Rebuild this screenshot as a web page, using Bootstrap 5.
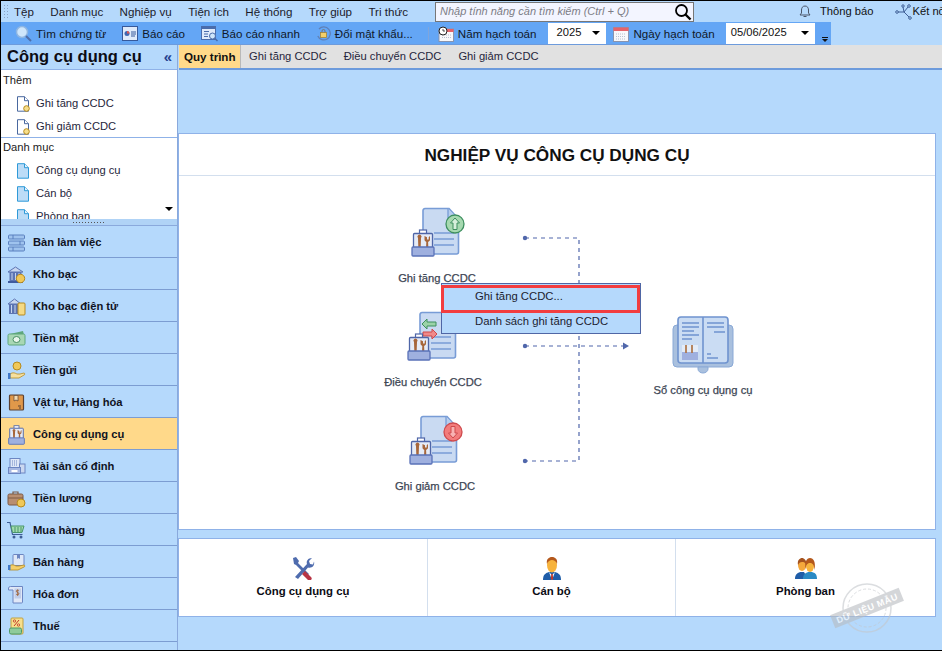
<!DOCTYPE html>
<html lang="vi">
<head>
<meta charset="utf-8">
<title>Công cụ dụng cụ</title>
<link href="https://cdn.jsdelivr.net/npm/bootstrap@5.3.0/dist/css/bootstrap.min.css" rel="stylesheet">
<style>
html,body{height:651px;overflow:hidden;margin:0;background:#b5d9fc}
body{font-family:"Liberation Sans",Arial,sans-serif;font-size:11.2px;color:#111;line-height:1.2}
svg{display:block;flex:none}
.app{width:942px;height:651px;border-top:1px solid #000;border-bottom:1px solid #000;border-left:1px solid #000;overflow:hidden;background:#b5d9fc}
.menubar{height:21px;padding-left:2px;flex:none}
.grip{width:5px;height:15px;margin-right:6px;flex:none;background-image:radial-gradient(circle,#8ba4c6 .8px,transparent 1px);background-size:3px 3px}
.menubar .nav-link{padding:0;color:#1b1b2b;font-size:11.600px;white-space:nowrap}
.menubar .nav{width:394px;justify-content:space-between;flex:none}
.search{width:259px;height:20px;margin-left:27px;margin-top:1px;flex:none;background:#f3f5ff;border:1px solid #777;padding:0 1px 0 4px}
.search span{font-style:italic;color:#7d7d86;font-size:11px}
.notify{margin-left:105px;flex:none}
.notify span{margin-left:1px}
.connect{margin-left:21px;flex:none}
.connect span{margin-left:-1px}
.toolbar{width:830px;height:23px;flex:none;background:#64a6f5;padding:1px 0 0 14px;border-bottom:1px solid #6d9bdc;font-size:11.6px}
.tool{margin-right:16px;color:#101828;flex:none}
.tool svg{margin-right:4px}
.sep{width:1px;height:14px;background:#7fa5dc;margin:0 9px 0 -1px;flex:none}
.pick{height:21px;background:#fff;padding:0 6px 0 8px;color:#111;flex:none;font-size:11.2px}
.pick-y{width:58px;margin:-1px 7px 0 12px}
.pick-d{width:89px;margin:-1px 6px 0 11px;padding-left:5px}
.caret{width:0;height:0;border-left:4px solid transparent;border-right:4px solid transparent;border-top:4px solid #000}
.more{width:8px;height:22px;padding-bottom:3px;flex:none}
.more i{display:block;width:6px;height:1px;background:#111;margin-bottom:1px}
.more b{display:block;width:0;height:0;border-left:3px solid transparent;border-right:3px solid transparent;border-top:3px solid #111}
.body-row{height:605px;flex:none}
.side{width:177px;height:605px;flex:none;border-right:1px solid #8aa9dc}
.side-h{height:25px;flex:none;padding:0 6px;font-size:16.500px;font-weight:700;color:#0c0c14;border-bottom:1px solid #8fb2e8}
.side-h .coll{color:#24408f;font-size:15px;font-weight:700;letter-spacing:-1px;margin-top:-1px}
.panel{background:#fff;color:#222;flex:none}
.p1{height:68px;border-bottom:1px solid #8fb2e8}
.p2{height:81px;overflow:hidden}
.p-title{height:21px;padding-left:2px}
.p1 .p-title{height:22px}
.p2 .p-title{padding-bottom:2px}
.p-item{height:23px;padding-left:14px;color:#26263c}
.p-item svg{margin-right:5px}
.scroll-d{position:absolute;right:4px;top:69px;width:0;height:0;border-left:4px solid transparent;border-right:4px solid transparent;border-top:4px solid #000}
.split{height:7px;flex:none;background:#b0d3f6;border-bottom:1px solid #8aa9dc}
.split i{display:block;width:34px;height:3px;margin-bottom:1px;margin-left:71px;background-image:radial-gradient(circle,#555 .7px,transparent .9px);background-size:3px 3px}
.side .list-group{flex:none}
.side .list-group-item{height:32px;margin:0;padding:2px 0 0 6px;background:#b5d9fc;border:0;border-bottom:1px solid #7c9dd2;border-radius:0;font-weight:700;color:#10131f;font-size:11.2px}
.side .list-group-item.active{background:#ffd98a;color:#10131f;margin:0}
.side .list-group-item svg{margin-right:7px}
.right{width:764px;flex:none}
.tabs{height:25px;flex:none;background:#e1e1e1;border-bottom:2px solid #6d9bdc;margin-left:1px}
.tabs .nav-link{padding:0 8.500px;height:23px;color:#26263c;font-size:11.2px;line-height:23px;border-radius:0}
.tabs .nav-link.active{background:#ffd98a;color:#111;font-weight:700;font-size:11.600px;padding:0 4px 0 5px;border-right:1px solid #b9b9b9}
.flow{width:758px;height:397px;margin-top:63px;flex:none;border:1px solid #8fb2e8;border-radius:0;background:#fff}
.flow .card-header{height:42px;flex:none;background:#fff;border-bottom:1px solid #d3dfee;border-radius:0;padding:2px 0 0;font-size:17.200px;font-weight:700;color:#111}
.canvas{height:355px}
.node{position:absolute;width:130px;text-align:center;color:#3d4654;-webkit-text-stroke:.25px #3d4654}
.node svg{margin:0 auto 10px}
.n1{left:193px;top:30px}
.n2{left:189px;top:134px}
.n3{left:191px;top:238px}
.n4{left:459px;top:138px}
.lines{position:absolute;left:0;top:0}
.ctx{position:absolute;left:262px;top:107px;width:200px;min-width:0;height:51px;padding:0;margin:0;background:#b5d9fc;border:1px solid #4f66a5;border-radius:0;display:block}
.ctx .dropdown-item{padding:0 0 0 33px;font-size:11.300px;color:#1c2230;background:transparent}
.ctx .hl{box-sizing:border-box;height:28px;margin:1px 0 0 -1px;width:199px;border:3px solid #f23d3f;padding-left:31px;line-height:17px}
.ctx .it2{height:20px;line-height:17px}
.bottom{width:758px;height:79px;margin-top:8px;flex:none;border:1px solid #8fb2e8;border-radius:0;background:#fff}
.bottom .cell{font-weight:700;color:#0c0c14;border-right:1px solid #d3dfee;width:248px;flex:none;font-size:11.400px}
.bottom .cell:first-child{width:249px}
.bottom .cell:last-child{border-right:0;flex:1 1 0;width:auto}
.bottom .cell svg{margin-bottom:5px}
.stamp{position:absolute;left:650px;top:43px;pointer-events:none}
.stamp text{font-family:"Liberation Sans",Arial,sans-serif;font-size:9px;font-weight:700;fill:#fff;letter-spacing:.5px}
</style>
</head>
<body>
<svg width="0" height="0" style="position:absolute">
<defs>
<symbol id="case" viewBox="0 0 24 28">
<rect x="8.5" y="1" width="7" height="4" fill="#fff" stroke="#4f66a8" stroke-width="1.2"/>
<rect x="2.5" y="4.5" width="19" height="18" rx="1" fill="#e5ebf7" stroke="#4f66a8" stroke-width="1.3"/>
<path d="M7 9a2 2 0 1 1 3 0l-.4 11H7.4z" fill="#a7663a"/>
<path d="M13.5 7v3.5c0 1.400 1 2 1.800 2.500l-.3 7h2.400l-.3-7c.8-.5 1.900-1.100 1.900-2.500V7l-1.300 1.300v2.200h-1.700V8.300z" fill="#a7663a"/>
<rect x="1" y="18" width="22" height="9" rx="1" fill="#9fb0df" stroke="#5a72b8" stroke-width="1.300"/>
</symbol>
<symbol id="doc" viewBox="0 0 38 48">
<path d="M3 1.500h24l9.500 10.500v33a2 2 0 0 1-2 2H3a2 2 0 0 1-2-2v-41.500a2 2 0 0 1 2-2z" fill="#c9daf2" stroke="#789cd6" stroke-width="1.600"/>
<path d="M26 1.500v10.500h10.500" fill="#b6cdee" stroke="#789cd6" stroke-width="1.300"/>
<path d="M12 26h20M12 32h20M12 38h20" stroke="#789cd6" stroke-width="1.600"/>
</symbol>
<symbol id="sdoc" viewBox="0 0 16 16">
<path d="M2.500 .7h7l4 4v10.500h-11z" fill="#fff" stroke="#49689f"/>
<path d="M9.500 .7v4h4" fill="#fff" stroke="#49689f"/>
</symbol>
<symbol id="bdoc" viewBox="0 0 16 16">
<path d="M2.500 .7h7l4 4v10.500h-11z" fill="#bcdcf7" stroke="#2f9ad8"/>
<path d="M9.500 .7v4h4" fill="#e5f3fd" stroke="#2f9ad8"/>
</symbol>
</defs>
</svg>
<div class="app d-flex flex-column">
  <div class="menubar d-flex align-items-center">
    <span class="grip"></span>
    <nav class="nav flex-nowrap">
      <a class="nav-link" href="#">Tệp</a>
      <a class="nav-link" href="#">Danh mục</a>
      <a class="nav-link" href="#">Nghiệp vụ</a>
      <a class="nav-link" href="#">Tiện ích</a>
      <a class="nav-link" href="#">Hệ thống</a>
      <a class="nav-link" href="#">Trợ giúp</a>
      <a class="nav-link" href="#">Tri thức</a>
    </nav>
    <div class="search d-flex align-items-center justify-content-between">
      <span>Nhập tính năng cần tìm kiếm (Ctrl + Q)</span>
      <svg width="18" height="18" viewBox="0 0 18 18"><circle cx="7.500" cy="7.500" r="5.500" fill="none" stroke="#000" stroke-width="1.800"/><path d="M11.500 11.500l5 5" stroke="#000" stroke-width="2.400"/></svg>
    </div>
    <div class="notify d-flex align-items-center gap-2 text-nowrap">
      <svg width="12" height="13" viewBox="0 0 12 13"><path d="M6 1c-2.500 0-3.500 2-3.500 4v3L1 10h10L9.500 8V5C9.500 3 8.500 1 6 1zM4.500 11.500h3" fill="none" stroke="#4a5568"/></svg>
      <span>Thông báo</span>
    </div>
    <div class="connect d-flex align-items-center text-nowrap">
      <svg width="19" height="16" viewBox="0 0 19 16" fill="none" stroke="#3f5f96"><path d="M3 8h6l4-5M9 8l5 5M9 8l-1-5" /><circle cx="2" cy="8" r="1.300"/><circle cx="14" cy="2" r="1.300"/><circle cx="15" cy="14" r="1.300"/><circle cx="8" cy="2" r="1.200"/></svg>
      <span>Kết nối</span>
    </div>
  </div>
  <div class="toolbar d-flex align-items-center text-nowrap">
    <div class="tool d-flex align-items-center">
      <svg width="17" height="17" viewBox="0 0 17 17"><circle cx="7" cy="7" r="5.500" fill="#cfe6fb" stroke="#8fb6e2" stroke-width="1.500"/><path d="M11 11l5 5" stroke="#4f6ea8" stroke-width="2"/></svg>Tìm chứng từ</div>
    <div class="tool d-flex align-items-center">
      <svg width="16" height="15" viewBox="0 0 16 15"><rect x=".5" y=".5" width="15" height="14" fill="#dfeafa" stroke="#37599a"/><circle cx="5" cy="7.500" r="2.500" fill="#3f66b0"/><path d="M5 7.500V5a2.500 2.500 0 0 1 2.500 2.500z" fill="#e0554f"/><path d="M9 6h5M9 8h5M9 10h4" stroke="#37599a"/></svg>Báo cáo</div>
    <div class="tool d-flex align-items-center">
      <svg width="17" height="17" viewBox="0 0 17 17"><rect x=".5" y="1.500" width="14" height="13" fill="#dfeafa" stroke="#4a6cab"/><rect x=".5" y="1.500" width="14" height="2.500" fill="#4a6cab"/><path d="M3 6.500h5M3 9h4M3 11.500h4" stroke="#4a6cab"/><circle cx="11.500" cy="11" r="3" fill="#cfe6fb" stroke="#4a6cab"/><path d="M13.500 13l3 3" stroke="#4a6cab" stroke-width="1.500"/></svg>Báo cáo nhanh</div>
    <div class="tool d-flex align-items-center">
      <svg width="15" height="15" viewBox="0 0 15 15"><path d="M3 3a6.500 6.500 0 1 1-1.200 7" fill="none" stroke="#5f80b8" stroke-width="1.300"/><rect x="4.500" y="6.500" width="6" height="5" fill="#f3cf69" stroke="#a67c22" stroke-width=".7"/><path d="M6 6.500V5a1.500 1.500 0 0 1 3 0v1.500" fill="none" stroke="#777"/></svg>Đổi mật khẩu...</div>
    <span class="sep"></span>
    <div class="tool d-flex align-items-center me-0">
      <svg width="16" height="16" viewBox="0 0 16 16"><rect x="1" y="3" width="14.500" height="12.500" fill="#f8f8fb" stroke="#8994ae"/><rect x="1" y="3" width="14.500" height="3" fill="#e5636a"/><path d="M4 9h9M4 11.500h9" stroke="#b8c0d0" stroke-dasharray="1 1"/><circle cx="5" cy="5" r="4" fill="#fff" stroke="#222"/><path d="M5 3v2h2" stroke="#222" fill="none" stroke-width=".8"/></svg>Năm hạch toán</div>
    <div class="pick pick-y d-flex align-items-center justify-content-between"><span>2025</span><i class="caret"></i></div>
    <div class="tool d-flex align-items-center me-0">
      <svg width="16" height="16" viewBox="0 0 16 16"><rect x=".5" y="1.500" width="15" height="14" fill="#f8f8fb" stroke="#8994ae"/><rect x=".5" y="1.500" width="15" height="3.500" fill="#e5636a"/><path d="M3 8h10M3 10.500h10M3 13h10" stroke="#b8c0d0" stroke-dasharray="1 1"/></svg>Ngày hạch toán</div>
    <div class="pick pick-d d-flex align-items-center justify-content-between"><span>05/06/2025</span><i class="caret"></i></div>
    <div class="more d-flex flex-column justify-content-end align-items-center"><i></i><b></b></div>
  </div>
  <div class="body-row d-flex">
    <aside class="side d-flex flex-column">
      <div class="side-h d-flex align-items-center justify-content-between"><span>Công cụ dụng cụ</span><span class="coll">«</span></div>
      <div class="panel p1">
        <div class="p-title d-flex align-items-center">Thêm</div>
        <div class="p-item d-flex align-items-center"><svg width="16" height="16" viewBox="0 0 16 16"><use href="#sdoc"/><circle cx="11.500" cy="12.500" r="2.800" fill="#f7df8c" stroke="#b68a1e"/></svg>Ghi tăng CCDC</div>
        <div class="p-item d-flex align-items-center"><svg width="16" height="16" viewBox="0 0 16 16"><use href="#sdoc"/><circle cx="11.500" cy="12.500" r="2.800" fill="#f7df8c" stroke="#b68a1e"/></svg>Ghi giảm CCDC</div>
      </div>
      <div class="panel p2 position-relative">
        <div class="p-title d-flex align-items-center">Danh mục</div>
        <div class="p-item d-flex align-items-center"><svg width="16" height="16" viewBox="0 0 16 16"><use href="#bdoc"/></svg>Công cụ dụng cụ</div>
        <div class="p-item d-flex align-items-center"><svg width="16" height="16" viewBox="0 0 16 16"><use href="#bdoc"/></svg>Cán bộ</div>
        <div class="p-item d-flex align-items-center"><svg width="16" height="16" viewBox="0 0 16 16"><use href="#bdoc"/></svg>Phòng ban</div>
        <span class="scroll-d"></span>
      </div>
      <div class="split d-flex align-items-end"><i></i></div>
      <div class="list-group list-group-flush">
        <a class="list-group-item d-flex align-items-center" href="#"><svg width="19" height="19" viewBox="0 0 19 19"><g fill="#9fc3ee" stroke="#5b80bf"><rect x="1.500" y="2" width="16" height="4" rx="1"/><rect x="1.500" y="8" width="16" height="4" rx="1"/><rect x="1.500" y="14" width="16" height="4" rx="1"/></g><path d="M6 2v4M13 8v4M6 14v4" stroke="#5b80bf"/></svg>Bàn làm việc</a>
        <a class="list-group-item d-flex align-items-center" href="#"><svg width="19" height="19" viewBox="0 0 19 19"><path d="M1 7l7.500-5L16 7z" fill="#c7d6ef" stroke="#5c74b2"/><rect x="2.500" y="7" width="12" height="9" fill="#5c74b2"/><path d="M5 8v7M8.500 8v7M12 8v7" stroke="#c7d6ef"/><rect x="1" y="16" width="15" height="2" fill="#3f5a9e"/><circle cx="13.500" cy="13.500" r="4.200" fill="#f0c859" stroke="#b68a1e"/></svg>Kho bạc</a>
        <a class="list-group-item d-flex align-items-center" href="#"><svg width="19" height="19" viewBox="0 0 19 19"><path d="M1 7l6.500-5L14 7z" fill="#c7d6ef" stroke="#5c74b2"/><rect x="2" y="7" width="10" height="10" fill="#5c74b2"/><path d="M4.500 8v8M8 8v8" stroke="#c7d6ef"/><rect x="11" y="6" width="7" height="12" rx="1" fill="#f5da84" stroke="#b68a1e"/></svg>Kho bạc điện tử</a>
        <a class="list-group-item d-flex align-items-center" href="#"><svg width="19" height="19" viewBox="0 0 19 19"><path d="M3 5l13-3 1 4z" fill="#5ea77c"/><rect x="1" y="5" width="17" height="11" rx="1.500" fill="#a8d7b4" stroke="#5ea77c"/><ellipse cx="9.500" cy="10.500" rx="3.500" ry="3" fill="#eaf6ec" stroke="#4a8f65"/></svg>Tiền mặt</a>
        <a class="list-group-item d-flex align-items-center" href="#"><svg width="19" height="19" viewBox="0 0 19 19"><circle cx="10" cy="5" r="4" fill="#f0c859" stroke="#b68a1e"/><path d="M3 13c3-2 5-1 7 0h3l4-1c1 0 1 2 0 2l-5 3H3z" fill="#f6e0a0" stroke="#b68a1e" stroke-width=".8"/><rect x="1" y="12" width="2.500" height="6" fill="#3f78c8"/></svg>Tiền gửi</a>
        <a class="list-group-item d-flex align-items-center" href="#"><svg width="19" height="19" viewBox="0 0 19 19"><rect x="2.500" y="2" width="14" height="15" rx="1" fill="#e0984a" stroke="#5b4030" stroke-width="1.200"/><path d="M7 2.500h4V8l-2-1-2 1z" fill="#f5dcb0" stroke="#5b4030" stroke-width=".7"/><path d="M11 13h3M12 15h2" stroke="#5b4030"/></svg>Vật tư, Hàng hóa</a>
        <a class="list-group-item active d-flex align-items-center" href="#"><svg width="19" height="20" viewBox="0 0 24 28"><use href="#case"/></svg>Công cụ dụng cụ</a>
        <a class="list-group-item d-flex align-items-center" href="#"><svg width="19" height="19" viewBox="0 0 19 19"><rect x="3" y="1.500" width="10" height="9" fill="#dfe8f7" stroke="#6c86c2"/><path d="M5 4h6M5 6h6M5 8h6" stroke="#6c86c2" stroke-dasharray="1 1"/><rect x="12.500" y="7" width="5.500" height="9" fill="#cbd8f0" stroke="#6c86c2"/><rect x="1.500" y="10.500" width="12" height="6" fill="#a8b9e2" stroke="#6c86c2"/><rect x="4.500" y="13" width="6" height="2" fill="#fff"/></svg>Tài sản cố định</a>
        <a class="list-group-item d-flex align-items-center" href="#"><svg width="19" height="19" viewBox="0 0 19 19"><path d="M6 5V3h5v2" fill="none" stroke="#7c5a46" stroke-width="1.200"/><rect x="1" y="5" width="15" height="11" rx="1.500" fill="#b98e71" stroke="#7c5a46"/><path d="M1 9h15" stroke="#7c5a46"/><circle cx="14" cy="14" r="4" fill="#f0c859" stroke="#b68a1e"/></svg>Tiền lương</a>
        <a class="list-group-item d-flex align-items-center" href="#"><svg width="19" height="19" viewBox="0 0 19 19"><path d="M0 1.500h3l2.500 12h10" fill="none" stroke="#3f5f96" stroke-width="1.200"/><path d="M4 5h13l-2 6.500H5.500z" fill="#a3dcae" stroke="#49956a"/><path d="M8 6v5M11 6v5M14 6v5" stroke="#49956a"/><circle cx="7" cy="16" r="1.500" fill="#3f5f96"/><circle cx="14" cy="16" r="1.500" fill="#3f5f96"/></svg>Mua hàng</a>
        <a class="list-group-item d-flex align-items-center" href="#"><svg width="19" height="19" viewBox="0 0 19 19"><rect x="6" y="1.500" width="11" height="11" rx="1" fill="#dfe8f7" stroke="#6c86c2"/><path d="M10 2v4l1.500-1 1.500 1V2z" fill="#6c86c2"/><path d="M2 13c3-2 5-1 7 0h3l5-1c1 0 1 2 0 2l-6 3H2z" fill="#f4cf6a" stroke="#b68a1e" stroke-width=".8"/><rect x="1" y="12" width="2.500" height="5" fill="#3f78c8"/></svg>Bán hàng</a>
        <a class="list-group-item d-flex align-items-center" href="#"><svg width="19" height="19" viewBox="0 0 19 19"><path d="M1.500 3a2 2 0 0 1 2-1.500h12V17a1 1 0 0 1-1 1H6V5H1.500z" fill="#e0e8f7" stroke="#6c86c2"/><rect x="7.500" y="3.500" width="6.500" height="10" fill="#c0cde9"/><path d="M11.700 5.500c-1-.7-2.400-.3-2.400.7 0 1.600 2.600.9 2.600 2.500 0 1-1.500 1.400-2.700.6M10.700 4.500v6.500" fill="none" stroke="#9c5a28" stroke-width=".8"/></svg>Hóa đơn</a>
        <a class="list-group-item d-flex align-items-center" href="#"><svg width="19" height="19" viewBox="0 0 19 19"><rect x="4" y="1" width="12" height="16" rx="1" fill="#f7df8c" stroke="#c0a040"/><path d="M7 9l5-6" stroke="#c0392b"/><circle cx="7.500" cy="4" r="1.200" fill="none" stroke="#c0392b" stroke-width=".8"/><circle cx="11.500" cy="8" r="1.200" fill="none" stroke="#c0392b" stroke-width=".8"/><rect x="2.500" y="11" width="12" height="6" rx="1.500" fill="#8ecb9b" stroke="#4f9a66"/></svg>Thuế</a>
        <a class="list-group-item" href="#"></a>
      </div>
    </aside>
    <section class="right d-flex flex-column">
      <nav class="nav tabs flex-nowrap">
        <a class="nav-link active" href="#">Quy trình</a>
        <a class="nav-link" href="#">Ghi tăng CCDC</a>
        <a class="nav-link" href="#">Điều chuyển CCDC</a>
        <a class="nav-link" href="#">Ghi giảm CCDC</a>
      </nav>
      <div class="card flow">
        <div class="card-header d-flex align-items-center justify-content-center">NGHIỆP VỤ CÔNG CỤ DỤNG CỤ</div>
        <div class="canvas position-relative">
          <svg class="lines" width="756" height="355" viewBox="0 0 756 355" fill="none" stroke="#5067ab" stroke-width="1.200">
            <path d="M346 62h54V285h-54" stroke-dasharray="4 4"/>
            <path d="M346 170h98" stroke-dasharray="4 4"/>
            <path d="M444 166.500l6 3.500-6 3.500z" fill="#5067ab" stroke="none"/>
            <g fill="#5067ab" stroke="none"><circle cx="346" cy="62" r="2.200"/><circle cx="346" cy="170" r="2.200"/><circle cx="346" cy="285" r="2.200"/></g>
          </svg>
          <div class="node n1">
            <svg width="56" height="56" viewBox="0 0 56 56"><use href="#doc" x="13" y="1" width="38" height="48"/><circle cx="46" cy="18" r="9" fill="#a6d9b0" stroke="#3e8f5f" stroke-width="1.300"/><path d="M46 12l4.500 5h-2.500v6.500h-4V17h-2.500z" fill="#d6efdb" stroke="#3e8f5f"/><use href="#case" x="2" y="23" width="24" height="28"/></svg>
            Ghi tăng CCDC
          </div>
          <div class="node n2">
            <svg width="56" height="56" viewBox="0 0 56 56"><use href="#doc" x="14" y="1" width="38" height="48"/><path d="M17 14l5-5v3h9v4h-9v3z" fill="#9bd3a8" stroke="#3e8f5f"/><path d="M36 20l-5-5v3h-9v4h9v3z" fill="#f08a8a" stroke="#d0484a" transform="translate(-4 4)"/><use href="#case" x="2" y="23" width="24" height="28"/></svg>
            Điều chuyển CCDC
          </div>
          <div class="node n3">
            <svg width="56" height="56" viewBox="0 0 56 56"><use href="#doc" x="13" y="1" width="38" height="48"/><circle cx="46" cy="18" r="9" fill="#f27c7c" stroke="#cf4a4d" stroke-width="1.300"/><path d="M46 24l4.500-5h-2.500v-6.500h-4V19h-2.500z" fill="#f8b3b3" stroke="#cf4a4d"/><use href="#case" x="2" y="23" width="24" height="28"/></svg>
            Ghi giảm CCDC
          </div>
          <div class="node n4">
            <svg width="62" height="60" viewBox="0 0 62 60"><rect x="1" y="11" width="60" height="42" rx="4" fill="#a9c0de" stroke="#8aa9d6"/><path d="M26 53h10v2a5 4 0 0 1-10 0z" fill="#a9c0de" stroke="#8aa9d6"/><rect x="6" y="3" width="50" height="46" rx="3" fill="#cadcf3" stroke="#6f93cf" stroke-width="1.600"/><path d="M31 3v46" stroke="#6f93cf" stroke-width="1.600"/><path d="M10 9h17M10 13h17M10 17h12M10 21h17M10 25h10M35 9h17M35 13h17M42 18h11M35 40h4M35 44h11" stroke="#6f93cf" stroke-width="1.300"/><rect x="10" y="31" width="16" height="15" fill="#e3ecf8"/><rect x="10" y="38" width="16" height="8" fill="#9fb0df"/><path d="M14 31v8M20 31v8" stroke="#b07a50" stroke-width="1.800"/></svg>
            Sổ công cụ dụng cụ
          </div>
          <div class="dropdown-menu ctx show">
            <a class="dropdown-item hl" href="#">Ghi tăng CCDC...</a>
            <a class="dropdown-item it2" href="#">Danh sách ghi tăng CCDC</a>
          </div>
        </div>
      </div>
      <div class="card bottom position-relative">
        <div class="d-flex h-100">
          <div class="cell d-flex flex-column align-items-center justify-content-center">
            <svg width="24" height="24" viewBox="0 0 24 24"><path d="M4 21L16 8c-1-3 1-6 5-6l-3 3 1 3 3 .5 1-3c1 4-2 7-6 6L7 23z" fill="#4f6cae"/><path d="M2 2l3-1 3 4-1 2 11 11-2 2L5 9 3 8z" fill="#4f6cae"/><path d="M14 15l6 6a2 2 0 0 1-3 3l-6-6z" fill="#b83545"/></svg>
            Công cụ dụng cụ
          </div>
          <div class="cell d-flex flex-column align-items-center justify-content-center">
            <svg width="24" height="24" viewBox="0 0 24 24"><path d="M3 24c0-6 3-7 6-8h6c3 1 6 2 6 8z" fill="#1f5da8"/><path d="M9 16l3 3 3-3-3 8z" fill="#fff"/><path d="M11.300 18h1.400l.5 5-1.200 1-1.200-1z" fill="#c0392b"/><ellipse cx="12" cy="9" rx="5" ry="7.500" fill="#f7b33c"/><path d="M7 8c-1-5 2-7 5-7s6 2 5 7c-1-3-3-4-5-4s-4 1-5 4z" fill="#b4581c"/></svg>
            Cán bộ
          </div>
          <div class="cell d-flex flex-column align-items-center justify-content-center">
            <svg width="24" height="24" viewBox="0 0 24 24"><path d="M1 23c0-5 3-6 5-7h4l4 7z" fill="#1f5da8"/><path d="M9 23c0-5 3-6 5-7h4c3 1 5 2 5 7z" fill="#2a8ac4"/><ellipse cx="8" cy="9" rx="4" ry="6" fill="#f4a83c"/><path d="M4 9c-1-5 2-7 4-7s5 2 4 7c-1-3-2-3-4-3s-3 1-4 3z" fill="#a5531f"/><ellipse cx="16" cy="10" rx="4" ry="6" fill="#f7b33c"/><path d="M11.500 14c-1-8 1-12 4.500-12s6 4 4.500 12c-.5-5-1.500-7-4.500-7s-4 2-4.500 7z" fill="#b4581c"/></svg>
            Phòng ban
          </div>
        </div>
        <svg class="stamp" width="76" height="52" viewBox="0 0 76 52" opacity=".6">
          <circle cx="38" cy="26" r="24" fill="none" stroke="#c4c8cc" stroke-width="1.500"/>
          <circle cx="38" cy="26" r="19" fill="none" stroke="#c4c8cc" stroke-width="1" stroke-dasharray="3 2"/>
          <g transform="rotate(-22 38 26)"><rect x="1" y="19" width="74" height="14" fill="#b8bcc1"/><text x="38" y="29.500" text-anchor="middle">DỮ LIỆU MẪU</text></g>
        </svg>
      </div>
    </section>
  </div>
</div>
</body>
</html>
